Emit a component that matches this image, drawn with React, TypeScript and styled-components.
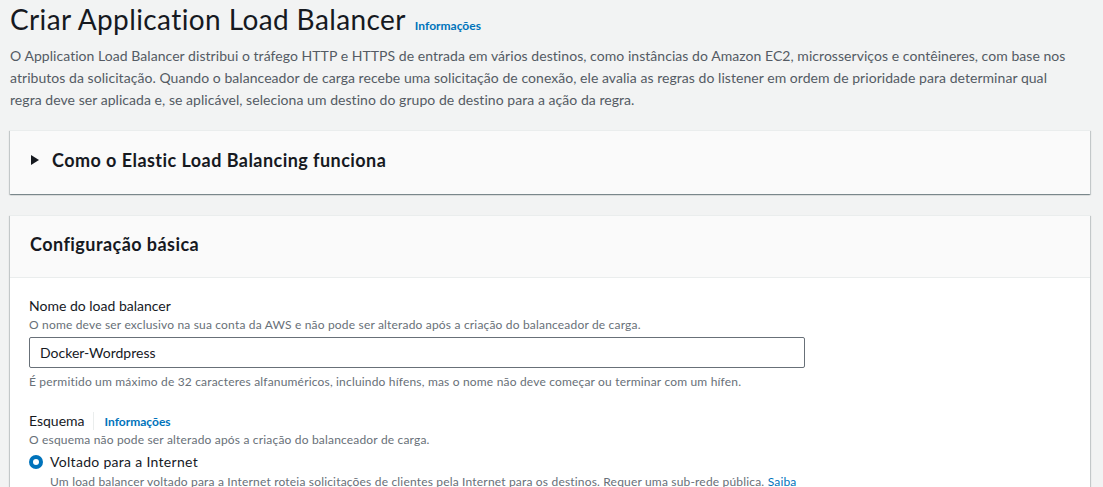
import React from "react";
import styled, { createGlobalStyle } from "styled-components";

const GlobalStyle = createGlobalStyle`
  html, body {
    margin: 0;
    padding: 0;
    background: #f2f3f3;
    font-family: Lato, "Liberation Sans", sans-serif;
    color: #16191f;
    overflow: hidden;
  }
`;

const Page = styled.div`
  width: 1080px;
  padding: 2px 13px 0 10px;
`;

const Header = styled.header`
  margin-bottom: 19px;
`;

const TitleRow = styled.div`
  display: flex;
  align-items: baseline;
  gap: 9px;
`;

const Title = styled.h1`
  margin: 0;
  font-size: 28px;
  font-weight: 400;
  line-height: 34px;
  letter-spacing: 0.4px;
  color: #16191f;
`;

const InfoLink = styled.a`
  font-size: 12px;
  font-weight: 700;
  color: #0073bb;
  text-decoration: none;
`;

const Description = styled.p`
  margin: 9px 0 0;
  font-size: 14px;
  line-height: 22px;
  letter-spacing: 0.05px;
  white-space: nowrap;
  color: #545b64;
`;

const Panel = styled.section`
  background: #fafafa;
  box-shadow: 0 1px 1px 0 rgba(0, 28, 36, 0.3), 1px 1px 1px 0 rgba(0, 28, 36, 0.15),
    -1px 1px 1px 0 rgba(0, 28, 36, 0.15);
  border-top: 1px solid #eaeded;
  margin-bottom: 21px;
`;

const Expander = styled.div`
  display: flex;
  align-items: center;
  box-sizing: border-box;
  height: 63px;
  padding: 0 0 5px 21px;
  gap: 13px;
`;

const PanelTitle = styled.h2`
  margin: 0;
  font-size: 18px;
  font-weight: 700;
  line-height: 22px;
  letter-spacing: 0.45px;
  color: #16191f;
`;

const PanelHeader = styled.div`
  display: flex;
  align-items: center;
  box-sizing: border-box;
  height: 62px;
  padding: 0 0 5px 20px;
  border-bottom: 1px solid #eaeded;
`;

const PanelBody = styled.div`
  background: #ffffff;
  padding: 18px 20px 20px 19px;
`;

const Field = styled.div`
  display: flex;
  flex-direction: column;
  margin-bottom: 21px;
`;

const LabelRow = styled.div`
  display: flex;
  align-items: center;
  height: 20px;
`;

const Label = styled.label`
  font-size: 14px;
  line-height: 20px;
  color: #16191f;
`;

const Divider = styled.span`
  width: 1px;
  height: 18px;
  background: #eaeded;
  margin: 0 11px 0 8px;
`;

const Hint = styled.div`
  font-size: 12px;
  line-height: 16px;
  letter-spacing: 0.18px;
  color: #687078;
  margin: 1px 0 4px;
`;

const Constraint = styled(Hint)`
  margin: 6px 0 0;
`;

const TextInput = styled.input`
  width: 776px;
  height: 31px;
  box-sizing: border-box;
  border: 1px solid #687078;
  border-radius: 2px;
  padding: 0 10px;
  font-family: inherit;
  font-size: 14px;
  color: #16191f;
  background: #fff;
  outline: none;
`;

const RadioRow = styled.div`
  display: grid;
  grid-template-columns: 14px 1fr;
  column-gap: 7px;
  align-items: center;
`;

const RadioDot = styled.span`
  width: 14px;
  height: 14px;
  border-radius: 50%;
  background: #0073bb;
  display: flex;
  align-items: center;
  justify-content: center;
  &::after {
    content: "";
    width: 6px;
    height: 6px;
    border-radius: 50%;
    background: #fff;
  }
`;

const RadioLabel = styled.span`
  font-size: 14px;
  line-height: 20px;
  letter-spacing: 0.3px;
  color: #16191f;
`;

const RadioHint = styled.div`
  grid-column: 2;
  max-width: 760px;
  margin-top: 2px;
  font-size: 12px;
  line-height: 16px;
  letter-spacing: 0.18px;
  color: #687078;
`;

const Link = styled.a`
  color: #0073bb;
  text-decoration: none;
`;

const Caret = () => (
  <svg width="8" height="10" viewBox="0 0 8 10">
    <path d="M0 0 L8 5 L0 10 Z" fill="#16191f" />
  </svg>
);

const App = (): JSX.Element => {
  return (
    <>
      <GlobalStyle />
      <Page>
        <Header>
          <TitleRow>
            <Title>Criar Application Load Balancer</Title>
            <InfoLink href="#">Informações</InfoLink>
          </TitleRow>
          <Description>
            O Application Load Balancer distribui o tráfego HTTP e HTTPS de entrada em vários destinos, como instâncias do
            Amazon EC2, microsserviços e contêineres, com base nos
            <br />
            atributos da solicitação. Quando o balanceador de carga recebe uma solicitação de conexão, ele avalia as regras
            do listener em ordem de prioridade para determinar qual
            <br />
            regra deve ser aplicada e, se aplicável, seleciona um destino do grupo de destino para a ação da regra.
          </Description>
        </Header>

        <Panel>
          <Expander>
            <Caret />
            <PanelTitle>Como o Elastic Load Balancing funciona</PanelTitle>
          </Expander>
        </Panel>

        <Panel>
          <PanelHeader>
            <PanelTitle>Configuração básica</PanelTitle>
          </PanelHeader>
          <PanelBody>
            <Field>
              <LabelRow>
                <Label>Nome do load balancer</Label>
              </LabelRow>
              <Hint>O nome deve ser exclusivo na sua conta da AWS e não pode ser alterado após a criação do balanceador de carga.</Hint>
              <TextInput defaultValue="Docker-Wordpress" />
              <Constraint>
                É permitido um máximo de 32 caracteres alfanuméricos, incluindo hífens, mas o nome não deve começar ou terminar com um hífen.
              </Constraint>
            </Field>
            <Field>
              <LabelRow>
                <Label>Esquema</Label>
                <Divider />
                <InfoLink href="#">Informações</InfoLink>
              </LabelRow>
              <Hint>O esquema não pode ser alterado após a criação do balanceador de carga.</Hint>
              <RadioRow>
                <RadioDot />
                <RadioLabel>Voltado para a Internet</RadioLabel>
                <RadioHint>
                  Um load balancer voltado para a Internet roteia solicitações de clientes pela Internet para os destinos.
                  Requer uma sub-rede pública. <Link href="#">Saiba mais</Link>
                </RadioHint>
              </RadioRow>
            </Field>
          </PanelBody>
        </Panel>
      </Page>
    </>
  );
};

export default App;
